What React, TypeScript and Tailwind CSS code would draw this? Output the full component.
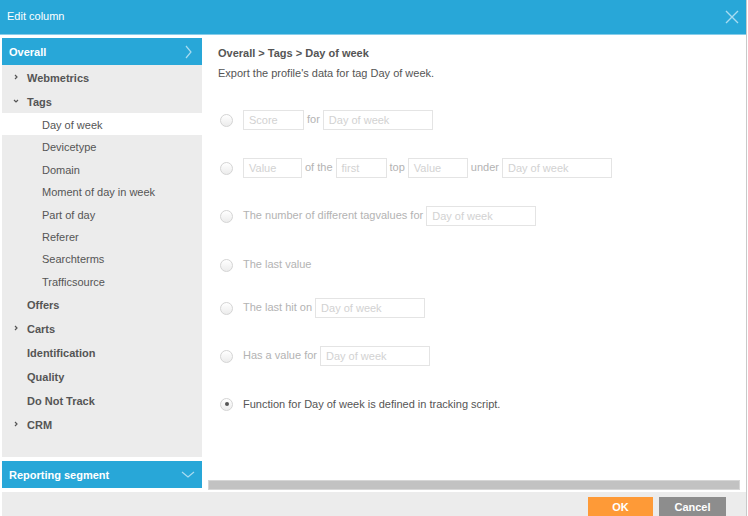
const font = { fontFamily: '"Liberation Sans", Arial, sans-serif' }

const Chevron = ({ open }: { open?: boolean }) => (
  <svg width="6" height="6" viewBox="0 0 6 6" className="text-[#555]">
    {open ? (
      <path d="M1 2 L3 4 L5 2" fill="none" stroke="currentColor" strokeWidth="1.2" />
    ) : (
      <path d="M2 1 L4 3 L2 5" fill="none" stroke="currentColor" strokeWidth="1.2" />
    )}
  </svg>
)

type Item = { label: string; level: 1 | 2; arrow?: "closed" | "open"; active?: boolean }

const items: Item[] = [
  { label: "Webmetrics", level: 1, arrow: "closed" },
  { label: "Tags", level: 1, arrow: "open" },
  { label: "Day of week", level: 2, active: true },
  { label: "Devicetype", level: 2 },
  { label: "Domain", level: 2 },
  { label: "Moment of day in week", level: 2 },
  { label: "Part of day", level: 2 },
  { label: "Referer", level: 2 },
  { label: "Searchterms", level: 2 },
  { label: "Trafficsource", level: 2 },
  { label: "Offers", level: 1 },
  { label: "Carts", level: 1, arrow: "closed" },
  { label: "Identification", level: 1 },
  { label: "Quality", level: 1 },
  { label: "Do Not Track", level: 1 },
  { label: "CRM", level: 1, arrow: "closed" },
]

const Radio = ({ checked }: { checked?: boolean }) => (
  <span className="mr-[10px] flex h-[13px] w-[13px] shrink-0 items-center justify-center rounded-full border border-[#d4d4d4] bg-linear-to-b from-white to-[#ececec]">
    {checked && <span className="h-[4px] w-[4px] rounded-full bg-[#555]" />}
  </span>
)

const Box = ({ w, text }: { w: string; text: string }) => (
  <span className={`flex h-[20px] ${w} shrink-0 items-center border border-[#e4e4e4] bg-white pl-[5px] pt-[1px] text-[#d2d2d2]`}>
    {text}
  </span>
)

const Label = ({ children }: { children: string }) => (
  <span className="mx-[3px] -mt-[2px] text-[#b3b3b3]">{children}</span>
)

export default function App() {
  return (
    <div style={font} className="h-[516px] w-[747px] overflow-hidden border-r border-[#c9c9c9] bg-white text-[11px]">
      <div className="flex h-[35px] items-center justify-between border-b border-[#86cdea] bg-[#28a7d8] pl-[7px] pr-[7px]">
        <span className="-mt-[1px] text-white">Edit column</span>
        <svg width="14" height="14" viewBox="0 0 14 14" className="text-[#a9dcf1]">
          <path d="M1 1 L13 13 M13 1 L1 13" stroke="currentColor" strokeWidth="1.4" />
        </svg>
      </div>

      <div className="flex flex-col pl-[2px] pt-[3px]">
        <div className="flex h-[452px]">
          <div className="flex w-[200px] flex-col">
            <div className="flex h-[27px] items-center justify-between bg-[#28a7d8] pl-[7px] pr-[10px] font-bold text-white">
              <span className="pt-[2px]">Overall</span>
              <svg width="7" height="14" viewBox="0 0 7 14" className="text-[#a9dcf1]">
                <path d="M1 1 L6 7 L1 13" fill="none" stroke="currentColor" strokeWidth="1.2" />
              </svg>
            </div>
            <div className="flex h-[392px] flex-col bg-[#ececec] text-[#555]">
              {items.map((it) =>
                it.level === 1 ? (
                  <div key={it.label} className="flex h-[24px] items-center font-bold">
                    <span className="flex w-[25px] justify-center pl-[3px]">
                      {it.arrow && <Chevron open={it.arrow === "open"} />}
                    </span>
                    <span className="pt-[2px]">{it.label}</span>
                  </div>
                ) : (
                  <div
                    key={it.label}
                    className={`flex h-[22.4px] items-center pl-[40px] pt-[2px] ${it.active ? "bg-white" : ""}`}
                  >
                    {it.label}
                  </div>
                )
              )}
            </div>
            <div className="mt-[4px] flex h-[27px] items-center justify-between bg-[#28a7d8] pl-[7px] pr-[7px] font-bold text-white">
              <span className="pt-[2px]">Reporting segment</span>
              <svg width="14" height="8" viewBox="0 0 14 8" className="text-[#a9dcf1]">
                <path d="M1 1 L7 6 L13 1" fill="none" stroke="currentColor" strokeWidth="1.2" />
              </svg>
            </div>
          </div>

          <div className="ml-[6px] flex w-[533px] flex-col">
            <div className="flex h-[442px] flex-col pl-[10px] pt-[8px]">
              <div className="leading-[14px] font-bold text-[#555]">Overall &gt; Tags &gt; Day of week</div>
              <div className="mt-[6px] leading-[14px] text-[#555]">Export the profile's data for tag Day of week.</div>

              <div className="mt-[30px] flex h-[20px] items-center pl-[2px]">
                <Radio />
                <Box w="w-[61px]" text="Score" />
                <Label>for</Label>
                <Box w="w-[110px]" text="Day of week" />
              </div>

              <div className="mt-[28px] flex h-[20px] items-center pl-[2px]">
                <Radio />
                <Box w="w-[59px]" text="Value" />
                <Label>of the</Label>
                <Box w="w-[51px]" text="first" />
                <Label>top</Label>
                <Box w="w-[60px]" text="Value" />
                <Label>under</Label>
                <Box w="w-[110px]" text="Day of week" />
              </div>

              <div className="mt-[28px] flex h-[20px] items-center pl-[2px]">
                <Radio />
                <span className="mr-[3px] -mt-[2px] text-[#b3b3b3]">The number of different tagvalues for</span>
                <Box w="w-[110px]" text="Day of week" />
              </div>

              <div className="mt-[29px] flex h-[20px] items-center pl-[2px]">
                <Radio />
                <span className="-mt-[1px] text-[#b3b3b3]">The last value</span>
              </div>

              <div className="mt-[23px] flex h-[20px] items-center pl-[2px]">
                <Radio />
                <span className="mr-[3px] -mt-[2px] text-[#b3b3b3]">The last hit on</span>
                <Box w="w-[110px]" text="Day of week" />
              </div>

              <div className="mt-[28px] flex h-[20px] items-center pl-[2px]">
                <Radio />
                <span className="mr-[3px] -mt-[2px] text-[#b3b3b3]">Has a value for</span>
                <Box w="w-[110px]" text="Day of week" />
              </div>

              <div className="mt-[28px] flex h-[20px] items-center pl-[2px]">
                <Radio checked />
                <span className="text-[#555]">Function for Day of week is defined in tracking script.</span>
              </div>
            </div>
            <div className="mr-[1px] h-[10px] border border-[#d6d6d6] bg-[#c2c2c2]" />
          </div>
        </div>

        <div className="mt-[2px] flex h-[24px] justify-end gap-[6px] bg-[#ececec] pr-[20px] pt-[5px]">
          <button className="h-[20px] w-[65px] bg-[#fe9a37] pt-[1px] font-bold text-white">OK</button>
          <button className="h-[20px] w-[67px] bg-[#8d8d8d] pt-[1px] font-bold text-white">Cancel</button>
        </div>
      </div>
    </div>
  )
}
